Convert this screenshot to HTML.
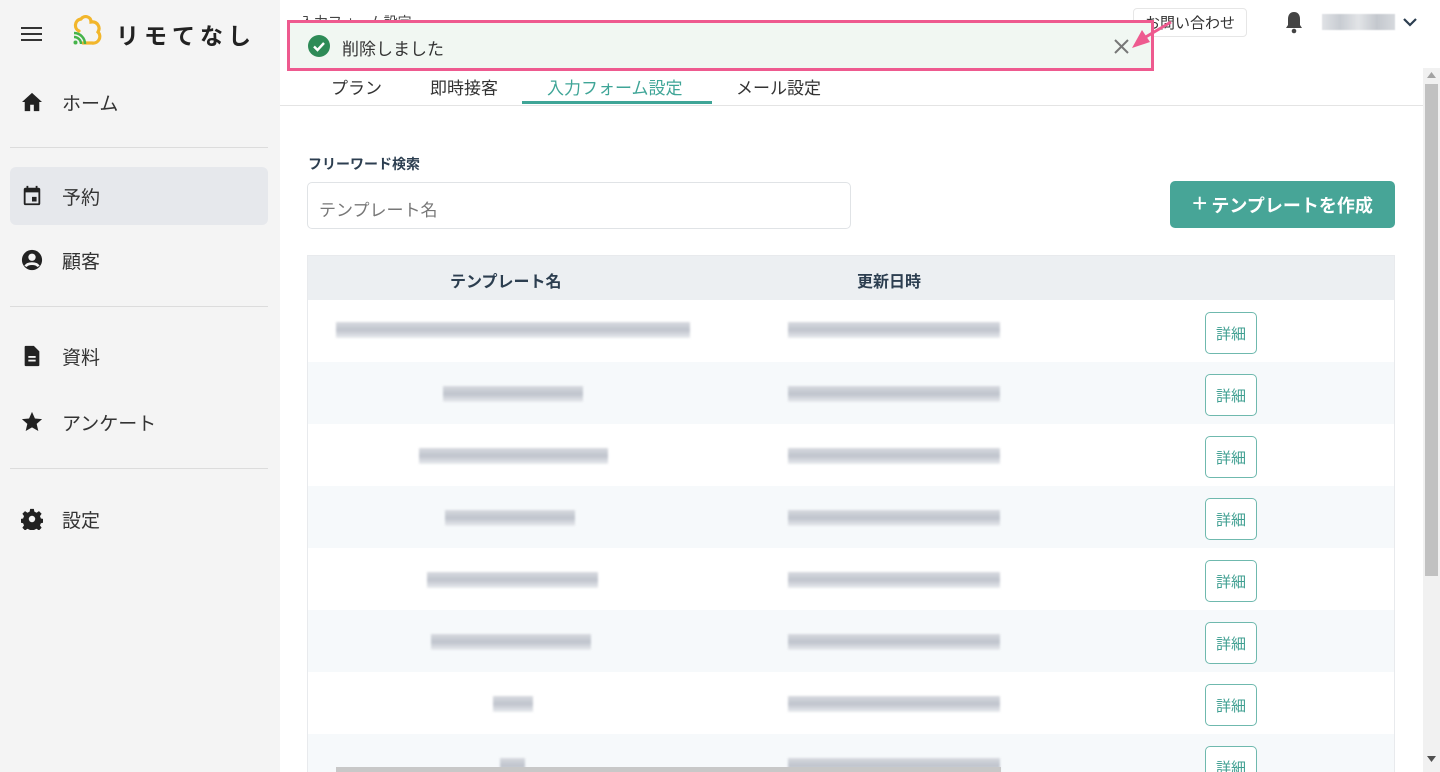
<!DOCTYPE html>
<html><head><meta charset="utf-8"><style>
*{margin:0;padding:0;box-sizing:border-box}
html,body{width:1440px;height:772px;overflow:hidden}
body{background:#fff;font-family:"Liberation Sans","Noto Sans CJK JP",sans-serif;color:#222}
#wrap{position:relative;width:1440px;height:772px;overflow:hidden}
.a{position:absolute}
#side{left:0;top:0;width:280px;height:772px;background:#f4f4f4}
.hr{position:absolute;left:10px;width:258px;height:1px;background:#dcdcdc}
.nav{position:absolute;left:10px;width:258px;height:58px;display:flex;align-items:center;font-size:19px;color:#333}
.nav svg{margin-left:11px;margin-right:19px}
.row{position:absolute;left:308px;width:1086px;height:62px}
.bl{position:absolute;height:16px;background:linear-gradient(#d4d7dd 0,#b9bec8 50%,#e7e9ed 100%);filter:blur(1px);opacity:.9}
.btn{position:absolute;left:1205px;width:52px;height:42px;border:1px solid #6fb9ae;border-radius:5px;color:#3f9f91;font-size:15px;display:flex;align-items:center;justify-content:center;background:#fff}
.tab{position:absolute;top:74px;font-size:17px;color:#333}
</style></head><body><div id="wrap">
<div id="side" class="a">
 <svg class="a" style="left:21px;top:26px" width="22" height="16"><rect y="1" width="21" height="2" fill="#333"/><rect y="7" width="21" height="2" fill="#333"/><rect y="13" width="21" height="2" fill="#333"/></svg>
 <svg class="a" style="left:71px;top:15px" width="34" height="32" viewBox="0 0 34 32"><path d="M8 16 C3 14 3 5 10 4 C13 0 20 1 20 7 C26 6 30 12 27 17 C31 21 28 29 21 28 L12 28" fill="none" stroke="#f2b62b" stroke-width="3.2" stroke-linecap="round"/><path d="M3 18 A11 11 0 0 1 14 29" fill="none" stroke="#45b34a" stroke-width="2.5"/><path d="M3 22 A7 7 0 0 1 10 29" fill="none" stroke="#45b34a" stroke-width="2.5"/><circle cx="4.5" cy="27.5" r="2" fill="#45b34a"/></svg>
 <div class="a" style="left:116px;top:17px;font-size:23px;font-weight:bold;letter-spacing:5px;color:#222">リモてなし</div>
 <div class="nav" style="top:73px"><svg width="22" height="20" viewBox="0 0 24 22"><path d="M12 1 L1 11 H4 V21 H10 V14 H14 V21 H20 V11 H23 Z" fill="#222"/></svg>ホーム</div>
 <div class="hr" style="top:147px"></div>
 <div class="nav" style="top:167px;background:#e6e8ec;border-radius:6px"><svg width="22" height="22" viewBox="0 0 24 24"><path d="M5 3h14a2 2 0 0 1 2 2v15a2 2 0 0 1-2 2H5a2 2 0 0 1-2-2V5a2 2 0 0 1 2-2z M5 8v12h14V8z M6 1h2v4H6z M16 1h2v4h-2z M12 13h5v5h-5z" fill="#222"/></svg>予約</div>
 <div class="nav" style="top:231px"><svg width="22" height="22" viewBox="0 0 24 24"><circle cx="12" cy="12" r="11" fill="#222"/><circle cx="12" cy="9" r="4" fill="#f4f4f4"/><path d="M5 19c2-4 12-4 14 0" fill="none" stroke="#f4f4f4" stroke-width="3"/></svg>顧客</div>
 <div class="hr" style="top:306px"></div>
 <div class="nav" style="top:327px"><svg width="22" height="22" viewBox="0 0 24 24"><path d="M5 1h9l6 6v15a1 1 0 0 1-1 1H5a1 1 0 0 1-1-1V2a1 1 0 0 1 1-1z" fill="#222"/><rect x="8" y="12" width="8" height="2" fill="#f4f4f4"/><rect x="8" y="16" width="8" height="2" fill="#f4f4f4"/></svg>資料</div>
 <div class="nav" style="top:393px"><svg width="22" height="22" viewBox="0 0 24 24"><path d="M12 1l3.2 7.2 7.8.7-5.9 5.2 1.8 7.7L12 17.8 5.1 21.8l1.8-7.7L1 8.9l7.8-.7z" fill="#222"/></svg>アンケート</div>
 <div class="hr" style="top:468px"></div>
 <div class="nav" style="top:490px"><svg width="22" height="22" viewBox="0 0 24 24"><path d="M10 1h4l.6 3 2.4 1.2 2.6-1.8 2.9 2.9-1.8 2.6 1 2.5 3 .6v4l-3 .6-1 2.4 1.8 2.6-2.9 2.9-2.6-1.8-2.4 1-.6 3h-4l-.6-3-2.4-1-2.6 1.8-2.9-2.9 1.8-2.6-1-2.4-3-.6v-4l3-.6 1-2.5-1.8-2.6 2.9-2.9 2.6 1.8 2.4-1.2z" fill="#222"/><circle cx="12" cy="12" r="3.5" fill="#f4f4f4"/></svg>設定</div>
</div>

<div class="a" style="left:300px;top:12px;font-size:14px;color:#444">入力フォーム設定</div>
<div class="a" style="left:1133px;top:8px;width:114px;height:29px;border:1px solid #e6e6e6;border-radius:4px;font-size:15px;color:#333;display:flex;align-items:center;justify-content:center">お問い合わせ</div>
<svg class="a" style="left:1284px;top:10px" width="20" height="24" viewBox="0 0 20 24"><path d="M10 2c-4 0-6 3-6 7v6l-2 3h16l-2-3V9c0-4-2-7-6-7z" fill="#444"/><circle cx="10" cy="21" r="2.3" fill="#444"/></svg>
<div class="a" style="left:1322px;top:14px;width:73px;height:16px;background:linear-gradient(90deg,#e0e2e6,#c8ccd2,#e2e4e7,#c4c8ce,#d6d9dd);filter:blur(.6px)"></div>
<svg class="a" style="left:1403px;top:18px" width="14" height="10"><path d="M1 1l6 6 6-6" fill="none" stroke="#2c3e50" stroke-width="2.2"/></svg>

<div class="a" style="left:287px;top:20px;width:867px;height:51px;border:3px solid #ee5a8f;background:#f1f7f2"></div>
<svg class="a" style="left:308px;top:35px" width="22" height="22" viewBox="0 0 22 22"><circle cx="11" cy="11" r="11" fill="#2e8b57"/><path d="M6 11.5l3.5 3.5 6.5-7" fill="none" stroke="#fff" stroke-width="2.4"/></svg>
<div class="a" style="left:342px;top:35px;font-size:17px;color:#333">削除しました</div>
<svg class="a" style="left:1114px;top:39px" width="15" height="15"><path d="M1 1l13 13M14 1L1 14" stroke="#777" stroke-width="2"/></svg>
<svg class="a" style="left:1128px;top:20px" width="45" height="40"><path d="M43 2 L16 18" stroke="#ee5a8f" stroke-width="3"/><path d="M4 28 L14 10 L22 22 Z" fill="#ee5a8f"/></svg>

<div class="tab" style="left:331px">プラン</div>
<div class="tab" style="left:430px">即時接客</div>
<div class="tab" style="left:547px;color:#3fa597">入力フォーム設定</div>
<div class="tab" style="left:736px">メール設定</div>
<div class="a" style="left:522px;top:101px;width:190px;height:3px;background:#3fa597"></div>
<div class="a" style="left:280px;top:105px;width:1143px;height:1px;background:#e4e4e4"></div>

<div class="a" style="left:1423px;top:68px;width:17px;height:704px;background:#f1f1f1"></div>
<div class="a" style="left:1425px;top:84px;width:13px;height:492px;background:#c1c1c1"></div>
<svg class="a" style="left:1427px;top:72px" width="9" height="6"><path d="M0 6L4.5 0 9 6z" fill="#a3a3a3"/></svg>
<svg class="a" style="left:1427px;top:756px" width="9" height="6"><path d="M0 0L4.5 6 9 0z" fill="#505050"/></svg>

<div class="a" style="left:308px;top:154px;font-size:14px;font-weight:bold;color:#2c3e50">フリーワード検索</div>
<div class="a" style="left:307px;top:182px;width:544px;height:47px;border:1px solid #e0e3e6;border-radius:5px;font-size:17px;color:#777;padding:13px 0 0 11px">テンプレート名</div>
<div class="a" style="left:1170px;top:181px;width:225px;height:47px;background:#47a597;border-radius:5px;color:#fff;font-size:18px;font-weight:bold;display:flex;align-items:center;justify-content:center"><span style="font-size:26px;font-weight:normal;margin-right:4px;margin-top:-3px">+</span>テンプレートを作成</div>

<div class="a" style="left:307px;top:255px;width:1088px;height:517px;border:1px solid #e8eaed"></div>
<div class="row" style="top:256px;height:44px;background:#eceff2"></div>
<div class="a" style="left:450px;top:268px;font-size:16px;font-weight:bold;color:#2c3e50">テンプレート名</div>
<div class="a" style="left:857px;top:268px;font-size:16px;font-weight:bold;color:#2c3e50">更新日時</div>

<div class="row" style="top:300px;background:#fff"></div>
<div class="row" style="top:362px;background:#f6f9fb"></div>
<div class="row" style="top:424px;background:#fff"></div>
<div class="row" style="top:486px;background:#f6f9fb"></div>
<div class="row" style="top:548px;background:#fff"></div>
<div class="row" style="top:610px;background:#f6f9fb"></div>
<div class="row" style="top:672px;background:#fff"></div>
<div class="row" style="top:734px;background:#f6f9fb"></div>

<div class="bl" style="left:336px;top:322px;width:354px"></div>
<div class="bl" style="left:443px;top:386px;width:140px"></div>
<div class="bl" style="left:419px;top:448px;width:189px"></div>
<div class="bl" style="left:445px;top:510px;width:130px"></div>
<div class="bl" style="left:427px;top:572px;width:171px"></div>
<div class="bl" style="left:431px;top:634px;width:160px"></div>
<div class="bl" style="left:493px;top:696px;width:40px"></div>
<div class="bl" style="left:500px;top:758px;width:25px"></div>
<div class="bl" style="left:788px;top:322px;width:212px"></div>
<div class="bl" style="left:788px;top:386px;width:212px"></div>
<div class="bl" style="left:788px;top:448px;width:212px"></div>
<div class="bl" style="left:788px;top:510px;width:212px"></div>
<div class="bl" style="left:788px;top:572px;width:212px"></div>
<div class="bl" style="left:788px;top:634px;width:212px"></div>
<div class="bl" style="left:788px;top:696px;width:212px"></div>
<div class="bl" style="left:788px;top:758px;width:212px"></div>

<div class="btn" style="top:312px">詳細</div>
<div class="btn" style="top:374px">詳細</div>
<div class="btn" style="top:436px">詳細</div>
<div class="btn" style="top:498px">詳細</div>
<div class="btn" style="top:560px">詳細</div>
<div class="btn" style="top:622px">詳細</div>
<div class="btn" style="top:684px">詳細</div>
<div class="btn" style="top:746px">詳細</div>

<div class="a" style="left:336px;top:767px;width:665px;height:5px;background:#c8c8c8"></div>
</div></body></html>
